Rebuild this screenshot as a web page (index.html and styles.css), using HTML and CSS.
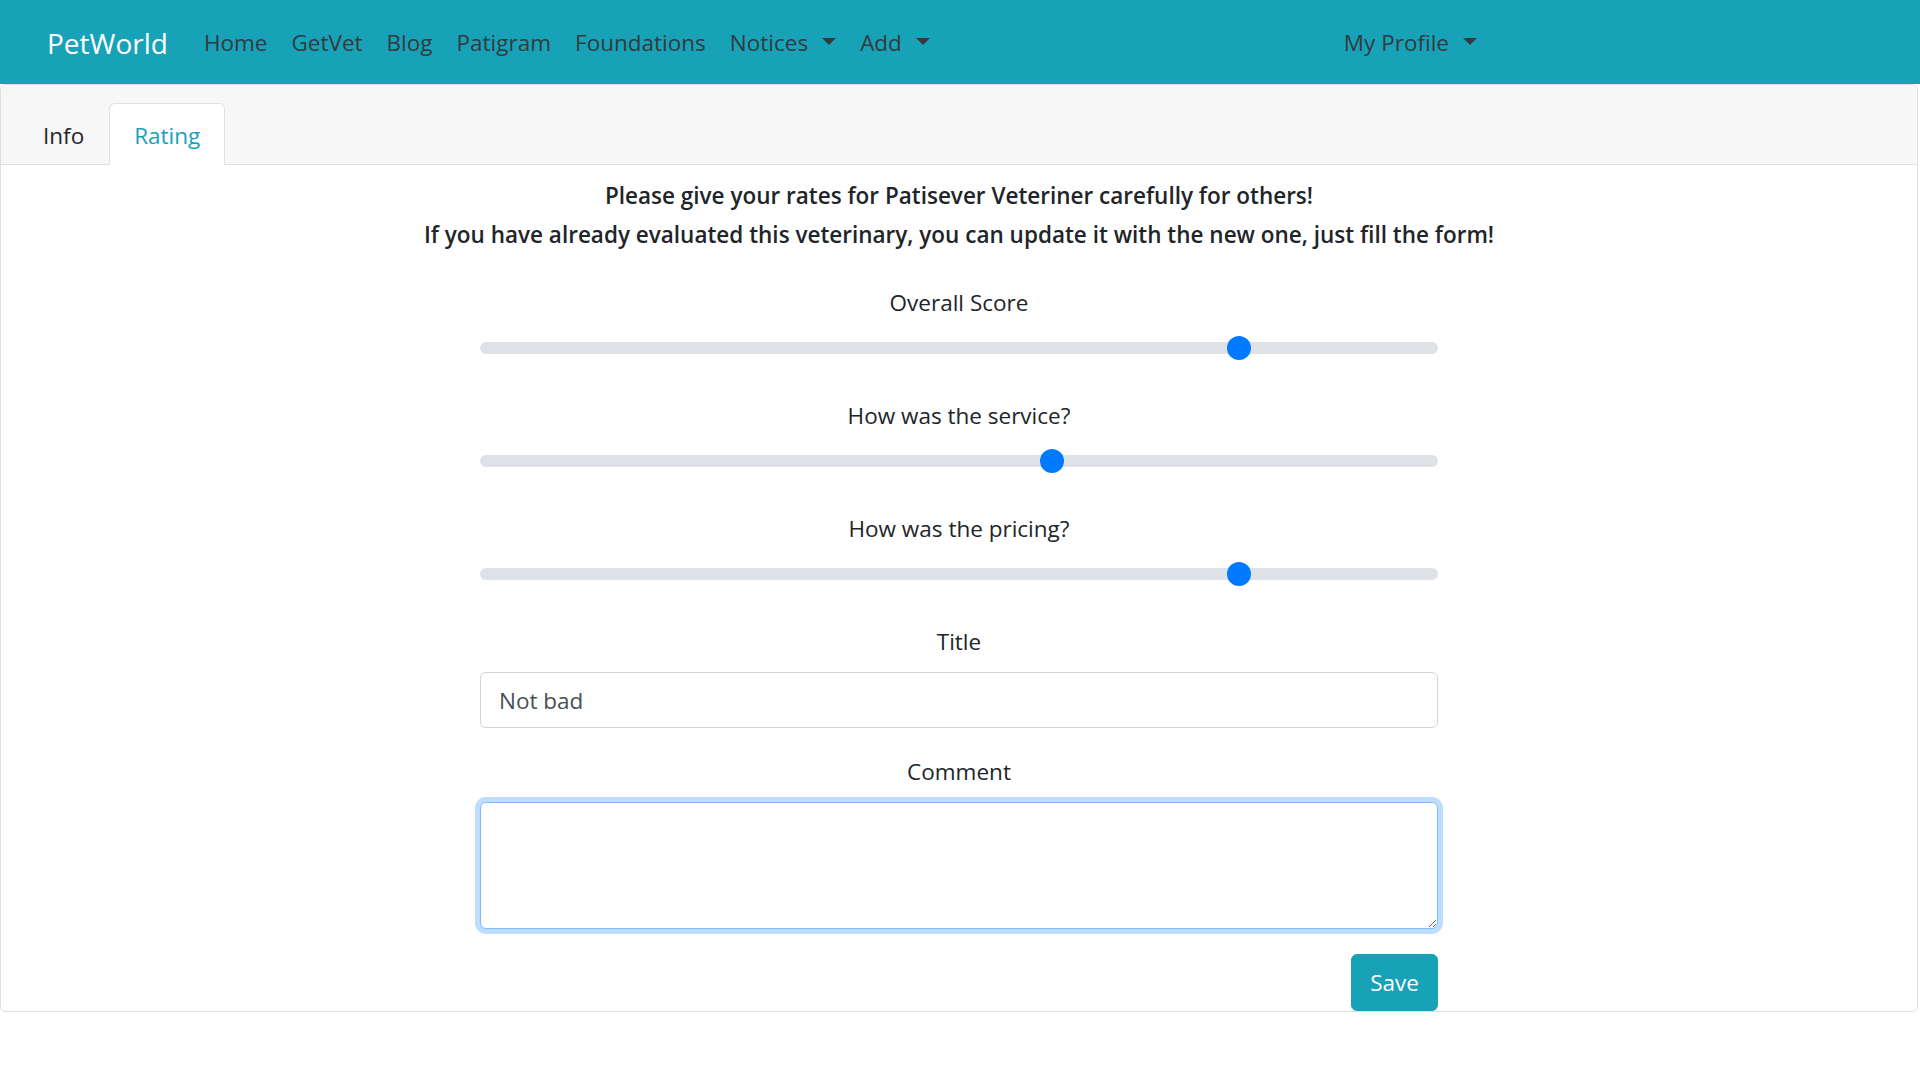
FILE: index.html
```html
<!DOCTYPE html>
<html lang="en">
<head>
<meta charset="utf-8">
<title>PetWorld - Rating</title>
<link rel="stylesheet" href="styles.css">
</head>
<body>
<nav class="navbar">
  <a class="brand" href="#">PetWorld</a>
  <ul class="nav-main">
    <li><a class="nav-link" href="#">Home</a></li>
    <li><a class="nav-link" href="#">GetVet</a></li>
    <li><a class="nav-link" href="#">Blog</a></li>
    <li><a class="nav-link" href="#">Patigram</a></li>
    <li><a class="nav-link" href="#">Foundations</a></li>
    <li><a class="nav-link" href="#">Notices<span class="caret"></span></a></li>
    <li><a class="nav-link" href="#">Add<span class="caret"></span></a></li>
  </ul>
  <ul class="nav-right">
    <li><a class="nav-link" href="#">My Profile<span class="caret"></span></a></li>
  </ul>
</nav>

<div class="card">
  <div class="card-header">
    <ul class="tabs">
      <li><a class="tab" href="#">Info</a></li>
      <li><a class="tab active" href="#">Rating</a></li>
    </ul>
  </div>
  <div class="card-body">
    <h6 class="intro">Please give your rates for Patisever Veteriner carefully for others!</h6>
    <h6 class="intro">If you have already evaluated this veterinary, you can update it with the new one, just fill the form!</h6>
    <form class="rating-form">
      <div class="group">
        <label class="label">Overall Score</label>
        <input class="range" type="range" min="0" max="10" value="8">
      </div>
      <div class="group">
        <label class="label">How was the service?</label>
        <input class="range" type="range" min="0" max="10" value="6">
      </div>
      <div class="group">
        <label class="label">How was the pricing?</label>
        <input class="range" type="range" min="0" max="10" value="8">
      </div>
      <div class="group group-title">
        <label class="label label-field">Title</label>
        <input class="field" type="text" value="Not bad">
      </div>
      <div class="group group-comment">
        <label class="label label-field">Comment</label>
        <textarea class="field field-area focused"></textarea>
      </div>
      <div class="actions">
        <button class="btn-save" type="button">Save</button>
      </div>
    </form>
  </div>
</div>
</body>
</html>
```
FILE: styles.css
```css
* { box-sizing: border-box; }

html, body {
  margin: 0;
  padding: 0;
  background: #fff;
}

body {
  font-family: "Segoe UI", "Open Sans", "Noto Sans", sans-serif;
  font-size: 22.5px;
  line-height: 36px;
  color: #212529;
}

a { text-decoration: none; }

/* ---------- Navbar ---------- */
.navbar {
  display: flex;
  align-items: center;
  height: 84px;
  padding: 2px 46px 0 47px;
  background: #17a2b8;
}

.brand {
  color: #fff;
  font-size: 28px;
  line-height: 45px;
  margin-right: 24px;
}

.nav-main, .nav-right {
  display: flex;
  list-style: none;
  margin: 0;
  padding: 0;
}

.nav-right {
  margin-left: auto;
  margin-right: 385px;
}

.nav-link {
  display: block;
  padding: 12px;
  color: #343a40;
  font-size: 22.5px;
  line-height: 36px;
}

.caret {
  display: inline-block;
  width: 0;
  height: 0;
  margin-left: 14px;
  vertical-align: 6px;
  border-top: 7px solid #343a40;
  border-left: 7px solid transparent;
  border-right: 7px solid transparent;
}

/* ---------- Card ---------- */
.card {
  border: 1px solid #dfdfdf;
  border-radius: 6px;
  margin-right: 2px;
}

.card-header {
  background: #f7f7f7;
  border-bottom: 1px solid #dfdfdf;
  border-radius: 6px 6px 0 0;
  padding: 18px 30px 0 17px;
}

.tabs {
  display: flex;
  list-style: none;
  margin: 0 0 -1px;
  padding: 0;
}

.tab {
  display: block;
  padding: 14px 24px 10px;
  line-height: 36px;
  color: #212529;
  border: 1px solid transparent;
  border-radius: 6px 6px 0 0;
}

.tab.active {
  color: #17a2b8;
  background: #fff;
  border-color: #dee2e6 #dee2e6 #fff;
}

.card-body {
  padding: 16px 30px 0;
  text-align: center;
}

.intro {
  margin: 0 0 10px;
  font-size: 22.5px;
  line-height: 29px;
  font-weight: 600;
}

/* ---------- Form ---------- */
.rating-form {
  width: 958px;
  margin: 36px auto 0;
}

.group {
  margin-bottom: 34px;
}

.group-title {
  margin-bottom: 26px;
}

.group-comment {
  margin-bottom: 25px;
}

.label {
  display: block;
  line-height: 36px;
  margin-bottom: 11px;
}

.label-field {
  margin-bottom: 12px;
}

.range {
  -webkit-appearance: none;
  appearance: none;
  display: block;
  width: 100%;
  height: 32px;
  margin: 0;
  padding: 0;
  background: transparent;
}

.range::-webkit-slider-runnable-track {
  height: 12px;
  background: #dee2e6;
  border-radius: 16px;
  border: 0;
}

.range::-webkit-slider-thumb {
  -webkit-appearance: none;
  appearance: none;
  width: 24px;
  height: 24px;
  margin-top: -6px;
  border: 0;
  border-radius: 50%;
  background: #007bff;
}

.range::-moz-range-track {
  height: 12px;
  background: #dee2e6;
  border-radius: 16px;
}

.range::-moz-range-thumb {
  width: 24px;
  height: 24px;
  border: 0;
  border-radius: 50%;
  background: #007bff;
}

.field {
  display: block;
  width: 100%;
  height: 56px;
  padding: 9px 18px;
  font-family: inherit;
  font-size: 22.5px;
  line-height: 36px;
  color: #495057;
  background: #fff;
  border: 1px solid #ced4da;
  border-radius: 6px;
  outline: none;
}

.field-area {
  height: 127px;
  resize: vertical;
}

.field-area.focused {
  border-color: #80bdff;
  box-shadow: 0 0 0 5px rgba(0, 123, 255, .25);
}

.actions {
  display: flex;
  justify-content: flex-end;
}

.btn-save {
  height: 57px;
  padding: 9px 18px;
  font-family: inherit;
  font-size: 22.5px;
  line-height: 36px;
  color: #fff;
  background: #17a2b8;
  border: 1px solid #17a2b8;
  border-radius: 6px;
}
```
